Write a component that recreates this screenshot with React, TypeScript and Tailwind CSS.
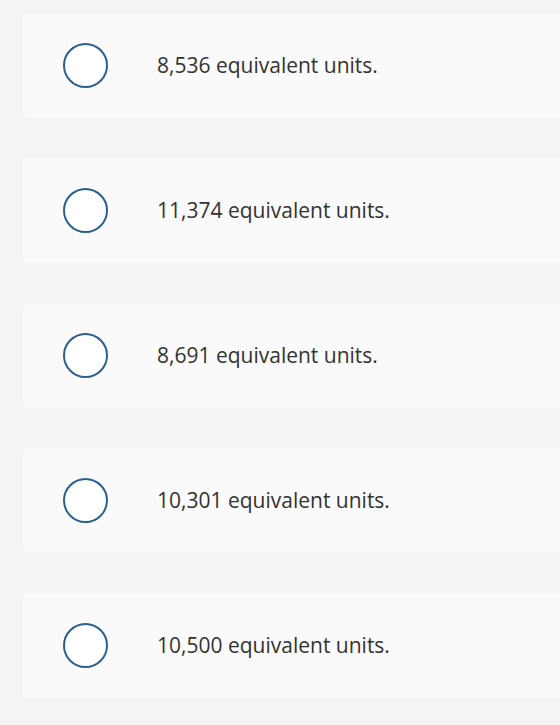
import React from 'react';

const options = [
  '8,536 equivalent units.',
  '11,374 equivalent units.',
  '8,691 equivalent units.',
  '10,301 equivalent units.',
  '10,500 equivalent units.',
];

const App: React.FC = () => {
  return (
    <div className="w-[560px] h-[725px] bg-[#f4f4f4] pt-[13px] pl-[23px] overflow-hidden">
      <div className="flex flex-col gap-[40px]">
        {options.map((label) => (
          <div
            key={label}
            className="h-[105px] w-[560px] bg-[#fafafa] rounded-[4px] flex items-center pl-[40px]"
          >
            <span className="w-[45px] h-[45px] rounded-full border-2 border-[#2c5f8f] bg-white shrink-0" />
            <span
              className="ml-[49px] text-[21px] text-[#333333]"
              style={{ fontFamily: '"Open Sans", sans-serif' }}
            >
              {label}
            </span>
          </div>
        ))}
      </div>
    </div>
  );
};

export default App;
